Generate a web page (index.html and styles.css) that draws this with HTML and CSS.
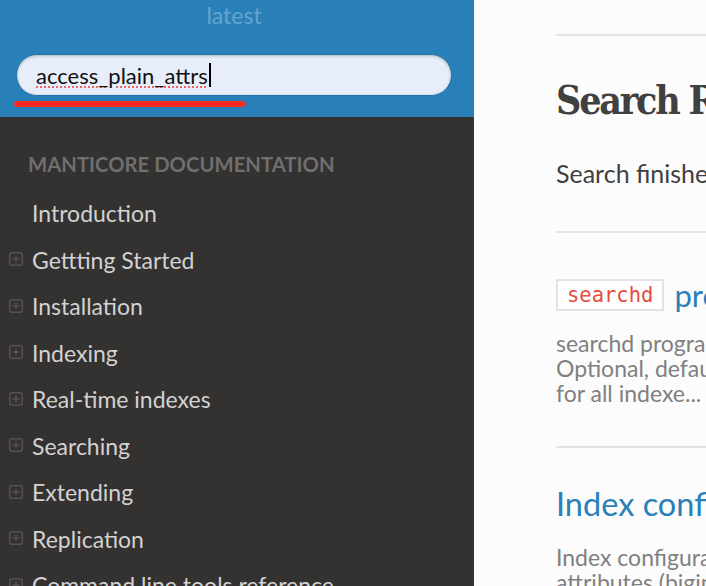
FILE: index.html
```html
<!DOCTYPE html>
<html>
<head>
<meta charset="utf-8">
<link rel="stylesheet" href="styles.css">
</head>
<body>
<div class="page">
  <nav class="sidebar">
    <div class="side-top">
      <div class="version">latest</div>
      <div class="search-box"><span class="query">access_plain_attrs</span><span class="caret"></span></div>
      <div class="marker"></div>
    </div>
    <div class="menu">
      <div class="caption">MANTICORE DOCUMENTATION</div>
      <ul class="toc">
        <li class="toc-item toc-leaf"><span class="toc-text">Introduction</span></li>
        <li class="toc-item"><svg class="plus" viewBox="0 0 14 14"><rect x="0.75" y="0.75" width="12.5" height="12.5" rx="2" fill="none" stroke="currentColor" stroke-width="1.5"/><path d="M7 3.5v7M3.5 7h7" stroke="currentColor" stroke-width="1.5"/></svg><span class="toc-text">Gettting Started</span></li>
        <li class="toc-item"><svg class="plus" viewBox="0 0 14 14"><rect x="0.75" y="0.75" width="12.5" height="12.5" rx="2" fill="none" stroke="currentColor" stroke-width="1.5"/><path d="M7 3.5v7M3.5 7h7" stroke="currentColor" stroke-width="1.5"/></svg><span class="toc-text">Installation</span></li>
        <li class="toc-item"><svg class="plus" viewBox="0 0 14 14"><rect x="0.75" y="0.75" width="12.5" height="12.5" rx="2" fill="none" stroke="currentColor" stroke-width="1.5"/><path d="M7 3.5v7M3.5 7h7" stroke="currentColor" stroke-width="1.5"/></svg><span class="toc-text">Indexing</span></li>
        <li class="toc-item"><svg class="plus" viewBox="0 0 14 14"><rect x="0.75" y="0.75" width="12.5" height="12.5" rx="2" fill="none" stroke="currentColor" stroke-width="1.5"/><path d="M7 3.5v7M3.5 7h7" stroke="currentColor" stroke-width="1.5"/></svg><span class="toc-text">Real-time indexes</span></li>
        <li class="toc-item"><svg class="plus" viewBox="0 0 14 14"><rect x="0.75" y="0.75" width="12.5" height="12.5" rx="2" fill="none" stroke="currentColor" stroke-width="1.5"/><path d="M7 3.5v7M3.5 7h7" stroke="currentColor" stroke-width="1.5"/></svg><span class="toc-text">Searching</span></li>
        <li class="toc-item"><svg class="plus" viewBox="0 0 14 14"><rect x="0.75" y="0.75" width="12.5" height="12.5" rx="2" fill="none" stroke="currentColor" stroke-width="1.5"/><path d="M7 3.5v7M3.5 7h7" stroke="currentColor" stroke-width="1.5"/></svg><span class="toc-text">Extending</span></li>
        <li class="toc-item"><svg class="plus" viewBox="0 0 14 14"><rect x="0.75" y="0.75" width="12.5" height="12.5" rx="2" fill="none" stroke="currentColor" stroke-width="1.5"/><path d="M7 3.5v7M3.5 7h7" stroke="currentColor" stroke-width="1.5"/></svg><span class="toc-text">Replication</span></li>
        <li class="toc-item"><svg class="plus" viewBox="0 0 14 14"><rect x="0.75" y="0.75" width="12.5" height="12.5" rx="2" fill="none" stroke="currentColor" stroke-width="1.5"/><path d="M7 3.5v7M3.5 7h7" stroke="currentColor" stroke-width="1.5"/></svg><span class="toc-text">Command line tools reference</span></li>
      </ul>
    </div>
  </nav>
  <main class="content">
    <div class="inner">
      <hr class="rule">
      <h1 class="title">Search Results</h1>
      <p class="summary">Search finished, found 2 page(s) matching the search query.</p>
      <hr class="rule rule-2">
      <div class="result">
        <div class="result-head"><code class="code">searchd</code><a class="result-link">program configuration options</a></div>
        <p class="context">searchd program configuration options ... agent_query_timeout<br>Optional, default is 3000 milliseconds ... access_plain_attrs<br>for all indexe...</p>
      </div>
      <hr class="rule rule-3">
      <div class="result">
        <a class="result-title">Index configuration options</a>
        <p class="context context-2">Index configuration options ... access_plain_attrs<br>attributes (bigint, int, float, timestamp) ...</p>
      </div>
    </div>
  </main>
</div>
</body>
</html>
```

FILE: styles.css
```css
* { box-sizing: border-box; }
html, body { margin: 0; padding: 0; }
body {
  width: 706px;
  height: 586px;
  overflow: hidden;
  background: #fcfcfc;
  font-family: Lato, "Noto Sans", sans-serif;
}
.page {
  display: flex;
  height: 586px;
  overflow: hidden;
}
.sidebar {
  width: 474px;
  flex: 0 0 474px;
  background: #343131;
  display: flex;
  flex-direction: column;
  overflow: hidden;
}
.side-top {
  flex: 0 0 117px;
  height: 117px;
  background: #2980b9;
  display: flex;
  flex-direction: column;
}
.version {
  height: 30px;
  line-height: 30px;
  text-align: center;
  font-size: 23px;
  color: rgba(255, 255, 255, 0.3);
  padding-right: 6px;
}
.search-box {
  margin: 24px 22px 0 16px;
  height: 42px;
  flex: 0 0 42px;
  border-radius: 21px;
  background: #e8eef9;
  border: 1px solid #2673a7;
  box-shadow: inset 0 1px 3px rgba(0, 0, 0, 0.25);
  display: flex;
  align-items: center;
  padding-left: 19px;
  font-size: 22px;
  color: #111;
}
.query {
  text-decoration: underline dotted #e8676a;
  text-decoration-thickness: 2px;
  text-underline-offset: 3px;
}
.caret {
  width: 2px;
  height: 24px;
  background: #000;
  margin-left: 1px;
}
.marker {
  margin: 5px 0 0 14px;
  width: 231px;
  height: 6px;
  flex: 0 0 6px;
  border-radius: 3px;
  background: #ff2a1f;
}
.menu {
  flex: 1 0 auto;
}
.caption {
  margin-top: 32px;
  height: 30px;
  line-height: 30px;
  padding-left: 28px;
  font-size: 20.3px;
  font-weight: 700;
  color: #6f6f6f;
}
.toc {
  list-style: none;
  margin: 11px 0 0 0;
  padding: 0;
}
.toc-item {
  height: 46.5px;
  display: flex;
  align-items: center;
  padding-left: 9px;
  color: #555151;
}
.plus {
  width: 14px;
  height: 14px;
  flex: 0 0 14px;
  margin-top: -1px;
}
.toc-text {
  margin-left: 9px;
  font-size: 23px;
  color: #d2d2d2;
  white-space: nowrap;
}
.toc-leaf { padding-left: 0; }
.toc-leaf .toc-text { margin-left: 32px; }

.content {
  flex: 1;
  overflow: hidden;
  padding-left: 82px;
}
.inner {
  width: 760px;
  padding-top: 34px;
  color: #404040;
}
.rule {
  margin: 0;
  border: 0;
  height: 2px;
  background: #e1e4e5;
}
.title {
  margin: 40px 0 0 0;
  font-family: "DejaVu Serif Condensed", "DejaVu Serif", "Liberation Serif", serif;
  font-stretch: condensed;
  font-weight: 700;
  font-size: 39px;
  letter-spacing: -2.2px;
  line-height: 48px;
  color: #404040;
  white-space: nowrap;
}
.summary {
  margin: 32px 0 0 0;
  font-size: 25px;
  line-height: 34px;
  white-space: nowrap;
}
.rule-2 { margin-top: 41px; }
.result-head {
  margin-top: 46px;
  display: flex;
  align-items: center;
  gap: 10px;
  white-space: nowrap;
}
.code {
  font-family: "DejaVu Sans Mono", "Liberation Mono", monospace;
  font-size: 20.5px;
  line-height: 28px;
  color: #e74c3c;
  background: #fff;
  border: 2px solid #e1e4e5;
  padding: 0 9px;
}
.result-link {
  color: #2980b9;
  font-size: 31px;
  line-height: 32px;
  white-space: nowrap;
}
.context {
  margin: 20px 0 0 0;
  font-size: 23px;
  line-height: 25px;
  color: #808080;
  white-space: nowrap;
}
.rule-3 { margin-top: 40px; }
.result-title {
  display: block;
  color: #2980b9;
  white-space: nowrap;
  margin-top: 36px;
  font-size: 32.5px;
  line-height: 40px;
}
.context-2 { margin-top: 21px; }
```
